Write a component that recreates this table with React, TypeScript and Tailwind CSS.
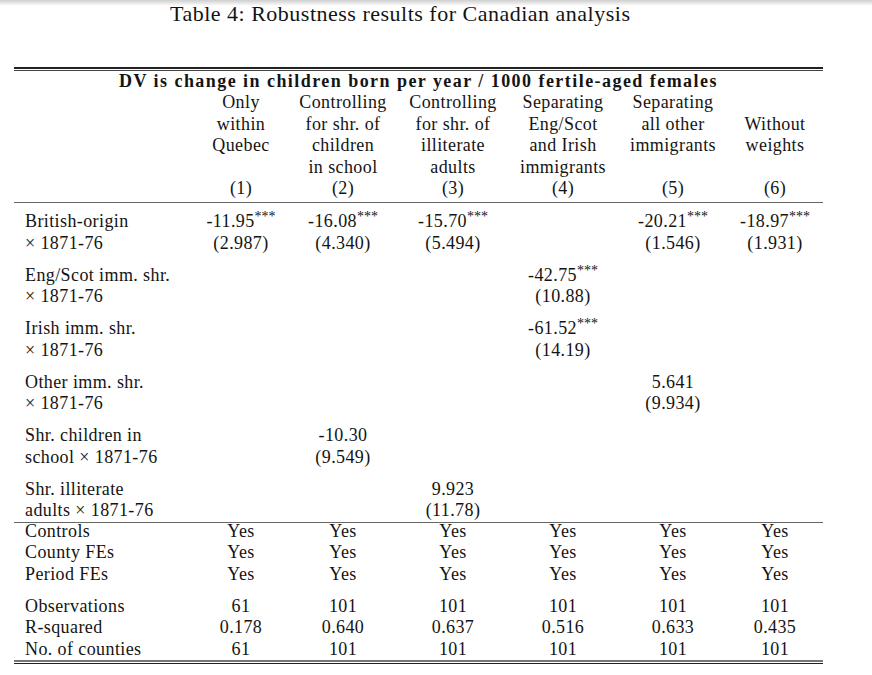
const FONT = { fontFamily: '"Liberation Serif", "Times New Roman", serif' };

const HEADERS = [
  ["Only", "within", "Quebec", ""],
  ["Controlling", "for shr. of", "children", "in school"],
  ["Controlling", "for shr. of", "illiterate", "adults"],
  ["Separating", "Eng/Scot", "and Irish", "immigrants"],
  ["Separating", "all other", "immigrants", ""],
  ["", "Without", "weights", ""],
];

type Cell = [string, string, string] | null; // value, stars, se

const ROWS: { label: [string, string]; cells: Cell[] }[] = [
  {
    label: ["British-origin", "× 1871-76"],
    cells: [
      ["-11.95", "***", "(2.987)"],
      ["-16.08", "***", "(4.340)"],
      ["-15.70", "***", "(5.494)"],
      null,
      ["-20.21", "***", "(1.546)"],
      ["-18.97", "***", "(1.931)"],
    ],
  },
  {
    label: ["Eng/Scot imm. shr.", "× 1871-76"],
    cells: [null, null, null, ["-42.75", "***", "(10.88)"], null, null],
  },
  {
    label: ["Irish imm. shr.", "× 1871-76"],
    cells: [null, null, null, ["-61.52", "***", "(14.19)"], null, null],
  },
  {
    label: ["Other imm. shr.", "× 1871-76"],
    cells: [null, null, null, null, ["5.641", "", "(9.934)"], null],
  },
  {
    label: ["Shr. children in", "school × 1871-76"],
    cells: [null, ["-10.30", "", "(9.549)"], null, null, null, null],
  },
  {
    label: ["Shr. illiterate", "adults × 1871-76"],
    cells: [null, null, ["9.923", "", "(11.78)"], null, null, null],
  },
];

const FE_ROWS = [
  ["Controls", "Yes", "Yes", "Yes", "Yes", "Yes", "Yes"],
  ["County FEs", "Yes", "Yes", "Yes", "Yes", "Yes", "Yes"],
  ["Period FEs", "Yes", "Yes", "Yes", "Yes", "Yes", "Yes"],
];

const STAT_ROWS = [
  ["Observations", "61", "101", "101", "101", "101", "101"],
  ["R-squared", "0.178", "0.640", "0.637", "0.516", "0.633", "0.435"],
  ["No. of counties", "61", "101", "101", "101", "101", "101"],
];

const GRID = "grid grid-cols-[176px_102px_102px_118px_102px_118px_86px]";

function SimpleRow({ row }: { row: string[] }) {
  return (
    <div className={`${GRID} h-[21.5px] leading-[21.5px]`}>
      <div className="pl-[11px] whitespace-nowrap">{row[0]}</div>
      {row.slice(1).map((v, i) => (
        <div key={i} className="text-center">{v}</div>
      ))}
    </div>
  );
}

export default function App() {
  return (
    <div className="relative w-[872px] h-[675px] bg-white text-[#141414] overflow-hidden" style={FONT}>
      <div className="absolute inset-x-0 top-0 h-[6px] bg-gradient-to-b from-[#cfcfcf] to-white" />

      <div className="pt-[1px] pl-[170px] h-[67px] text-[22px] leading-[25px] tracking-[0.5px] whitespace-nowrap">
        Table 4: Robustness results for Canadian analysis
      </div>

      <div className="ml-[14px] w-[809px] text-[18px] tracking-[0.4px]">
        <div className="h-[1.5px] bg-[#222]" />
        <div className="mt-[1.5px] h-px bg-[#444]" />

        <div className="h-[21px] leading-[21px] text-center font-bold tracking-[1.45px] whitespace-nowrap">
          DV is change in children born per year / 1000 fertile-aged females
        </div>

        <div className={GRID}>
          <div />
          {HEADERS.map((h, i) => (
            <div key={i} className="text-center leading-[21.5px]">
              {h.map((line, j) => (
                <div key={j} className="h-[21.5px] whitespace-nowrap">{line}</div>
              ))}
              <div className="h-[21.5px]">({i + 1})</div>
            </div>
          ))}
        </div>

        <div className="mt-[2px] h-[1.5px] bg-[#666]" />

        <div className="pt-[8px] flex flex-col gap-[10.5px]">
          {ROWS.map((r, i) => (
            <div key={i} className={`${GRID} leading-[21.5px]`}>
              <div className="pl-[11px]">
                <div className="h-[21.5px] whitespace-nowrap">{r.label[0]}</div>
                <div className="h-[21.5px] whitespace-nowrap">{r.label[1]}</div>
              </div>
              {r.cells.map((c, j) => (
                <div key={j} className="text-center">
                  {c && (
                    <>
                      <div className="h-[21.5px] whitespace-nowrap">
                        {c[0]}
                        {c[1] && <sup className="text-[14px] top-[-6px] tracking-normal">{c[1]}</sup>}
                      </div>
                      <div className="h-[21.5px]">{c[2]}</div>
                    </>
                  )}
                </div>
              ))}
            </div>
          ))}
        </div>

        <div className="h-[1.5px] bg-[#666]" />

        <div className="-mt-[2.5px]">
          {FE_ROWS.map((r) => (
            <SimpleRow key={r[0]} row={r} />
          ))}
          <div className="h-[10.5px]" />
          {STAT_ROWS.map((r) => (
            <SimpleRow key={r[0]} row={r} />
          ))}
        </div>

        <div className="h-[1.5px] bg-[#777]" />
        <div className="mt-[1.5px] h-px bg-[#222]" />
      </div>
    </div>
  );
}
